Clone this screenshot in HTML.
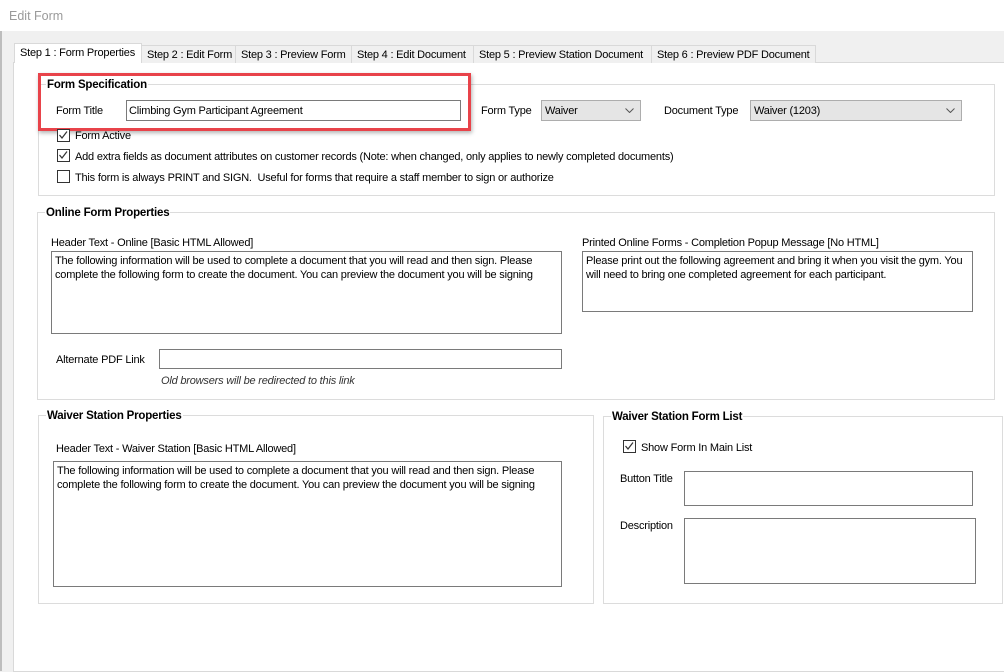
<!DOCTYPE html>
<html><head><style>
*{margin:0;padding:0;box-sizing:border-box}
body{width:1004px;height:664px;overflow:hidden;background:#f0f0f0;font:11px "Liberation Sans",sans-serif;letter-spacing:-0.2px;color:#000;position:relative}
.a{position:absolute;white-space:nowrap}
.title{left:0;top:0;width:1004px;height:31px;background:#fff}
.tab{top:45px;height:18px;background:#f0f0f0;border:1px solid #d9d9d9;border-bottom:none;padding:3px 0 0 5px;overflow:hidden}
.panel{left:13px;top:62px;width:995px;height:610px;background:#fff;border:1px solid #d9d9d9}
.grp{border:1px solid #dcdcdc}
.gt{font-weight:bold;background:#fff;padding:0 1px;font-size:11.5px}
.in{background:#fff;border:1px solid #7a7a7a}
.sel{background:#e5e5e5;border:1px solid #adadad;padding:3px 0 0 3px}
.sel svg{position:absolute;right:6px;top:7px}
.cb{width:13px;height:13px;border:1px solid #333;background:#fff}
.cb svg{position:absolute;left:1px;top:1px}
.ta{padding:2px 3px;line-height:14px;white-space:normal}
</style></head><body>
<div class="a title"></div>
<div class="a" style="left:9px;top:9px;color:#9a9a9a;font-size:12.5px;letter-spacing:0">Edit Form</div>
<div class="a" style="left:0;top:31px;width:2px;height:640px;background:#bdbdbd"></div>
<div class="a panel"></div>
<div class="a tab" style="left:14px;top:43px;height:20px;width:128px;background:#fff">Step 1 : Form Properties</div>
<div class="a tab" style="left:141px;width:95px">Step 2 : Edit Form</div>
<div class="a tab" style="left:235px;width:117px">Step 3 : Preview Form</div>
<div class="a tab" style="left:351px;width:123px">Step 4 : Edit Document</div>
<div class="a tab" style="left:473px;width:179px">Step 5 : Preview Station Document</div>
<div class="a tab" style="left:651px;width:165px">Step 6 : Preview PDF Document</div>

<div class="a grp" style="left:38px;top:84px;width:957px;height:112px"></div>
<div class="a gt" style="left:46px;top:79px">Form Specification</div>
<div class="a" style="left:56px;top:105px">Form Title</div>
<div class="a in" style="left:126px;top:100px;width:335px;height:21px;padding:4px 2px">Climbing Gym Participant Agreement</div>
<div class="a" style="left:38px;top:73px;width:433px;height:58px;border:3px solid #e8434a;box-shadow:1px 2px 4px rgba(0,0,0,.3)"></div>
<div class="a" style="left:481px;top:105px">Form Type</div>
<div class="a sel" style="left:541px;top:100px;width:100px;height:21px;padding-top:4px">Waiver<svg width="9" height="5"><path d="M0.5 0.5L4.5 4.5L8.5 0.5" stroke="#555" fill="none"/></svg></div>
<div class="a" style="left:664px;top:105px">Document Type</div>
<div class="a sel" style="left:750px;top:100px;width:212px;height:21px;padding-top:4px">Waiver (1203)<svg width="9" height="5"><path d="M0.5 0.5L4.5 4.5L8.5 0.5" stroke="#555" fill="none"/></svg></div>
<div class="a cb" style="left:57px;top:129px"><svg width="10" height="10" style="left:0;top:0"><path d="M1.5 5L4 8L9 1.5" stroke="#333" fill="none" stroke-width="1.2"/></svg></div>
<div class="a" style="left:75px;top:130px">Form Active</div>
<div class="a cb" style="left:57px;top:149px"><svg width="10" height="10" style="left:0;top:0"><path d="M1.5 5L4 8L9 1.5" stroke="#333" fill="none" stroke-width="1.2"/></svg></div>
<div class="a" style="left:75px;top:151px">Add extra fields as document attributes on customer records (Note: when changed, only applies to newly completed documents)</div>
<div class="a cb" style="left:57px;top:170px"></div>
<div class="a" style="left:75px;top:172px">This form is always PRINT and SIGN.&nbsp; Useful for forms that require a staff member to sign or authorize</div>

<div class="a grp" style="left:37px;top:212px;width:958px;height:188px"></div>
<div class="a gt" style="left:45px;top:207px">Online Form Properties</div>
<div class="a" style="left:51px;top:237px">Header Text - Online [Basic HTML Allowed]</div>
<div class="a in ta" style="left:51px;top:251px;width:511px;height:83px">The following information will be used to complete a document that you will read and then sign. Please complete the following form to create the document. You can preview the document you will be signing</div>
<div class="a" style="left:582px;top:237px">Printed Online Forms - Completion Popup Message [No HTML]</div>
<div class="a in ta" style="left:582px;top:251px;width:391px;height:61px">Please print out the following agreement and bring it when you visit the gym. You will need to bring one completed agreement for each participant.</div>
<div class="a" style="left:56px;top:354px">Alternate PDF Link</div>
<div class="a in" style="left:159px;top:349px;width:403px;height:20px"></div>
<div class="a" style="left:161px;top:375px;font-style:italic;color:#333">Old browsers will be redirected to this link</div>

<div class="a grp" style="left:38px;top:415px;width:556px;height:189px"></div>
<div class="a gt" style="left:46px;top:410px">Waiver Station Properties</div>
<div class="a" style="left:56px;top:443px">Header Text - Waiver Station [Basic HTML Allowed]</div>
<div class="a in ta" style="left:53px;top:461px;width:509px;height:126px">The following information will be used to complete a document that you will read and then sign. Please complete the following form to create the document. You can preview the document you will be signing</div>

<div class="a grp" style="left:603px;top:416px;width:400px;height:188px"></div>
<div class="a gt" style="left:611px;top:411px">Waiver Station Form List</div>
<div class="a cb" style="left:623px;top:440px"><svg width="10" height="10" style="left:0;top:0"><path d="M1.5 5L4 8L9 1.5" stroke="#333" fill="none" stroke-width="1.2"/></svg></div>
<div class="a" style="left:641px;top:442px">Show Form In Main List</div>
<div class="a" style="left:620px;top:473px">Button Title</div>
<div class="a in" style="left:684px;top:471px;width:289px;height:35px"></div>
<div class="a" style="left:620px;top:520px">Description</div>
<div class="a in" style="left:684px;top:518px;width:292px;height:66px"></div>
</body></html>
